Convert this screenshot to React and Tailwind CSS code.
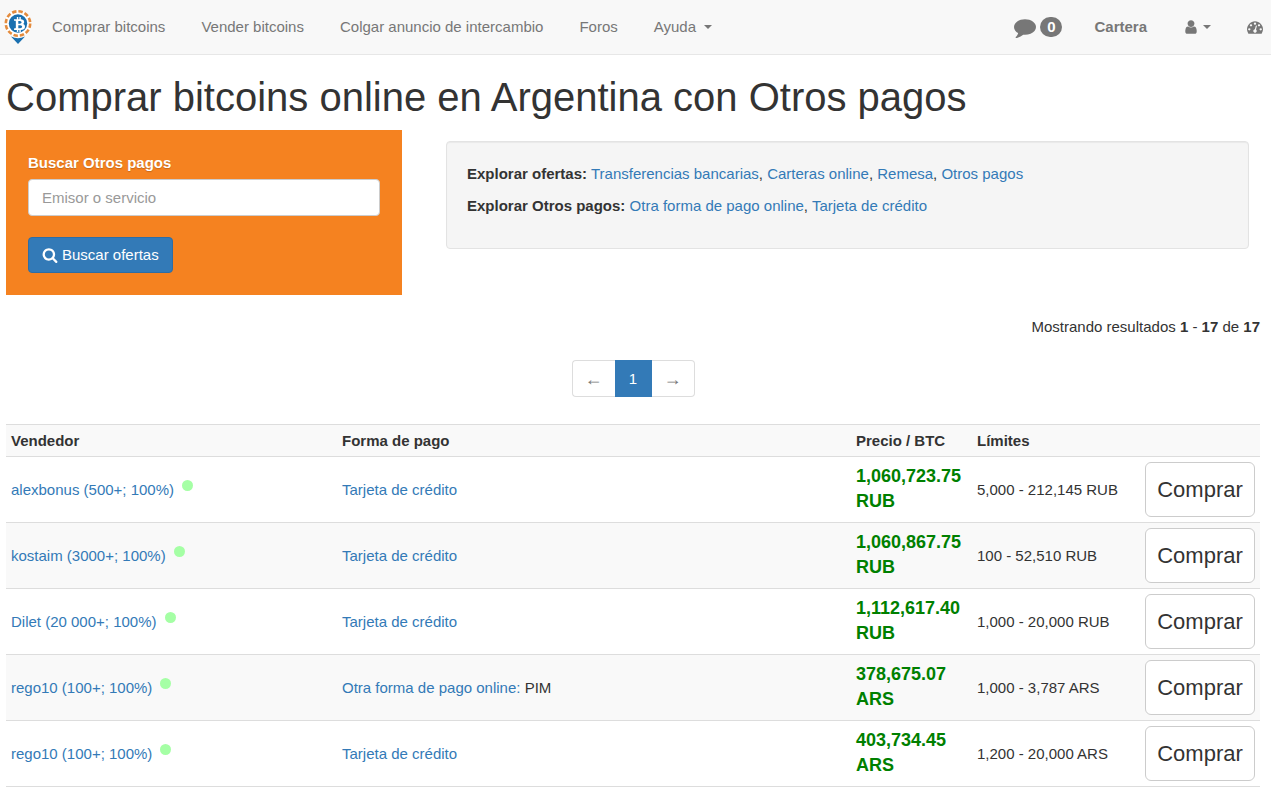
import React, { useState } from 'react';
import { FaBtc } from 'react-icons/fa';

const icons = {
  comment: "M1792 896q0 174-120 321.5t-326 233-450 85.5q-70 0-145-8-198 175-460 242-49 14-114 22h-5q-15 0-27-10.5t-16-27.5v-1q-3-4-.5-12t2-10 4.5-9.5l6-9 7-8.5 8-9q7-8 31-34.5t34.5-38 31-39.5 32.5-51 27-59 26-76q-157-89-247.5-220t-90.5-281q0-130 71-248.5t191-204.5 286-136.5 348-50.5 348 50.5 286 136.5 191 204.5 71 248.5z",
  user: "M1536 1399q0 109-62.5 187t-150.5 78h-854q-88 0-150.5-78t-62.5-187q0-85 8.5-160.5t31.5-152 58.5-131 94-89 134.5-34.5q131 128 313 128t313-128q76 0 134.5 34.5t94 89 58.5 131 31.5 152 8.5 160.5zm-256-887q0 159-112.5 271.5t-271.5 112.5-271.5-112.5-112.5-271.5 112.5-271.5 271.5-112.5 271.5 112.5 112.5 271.5z",
  search: "M1216 832q0-185-131.5-316.5t-316.5-131.5-316.5 131.5-131.5 316.5 131.5 316.5 316.5 131.5 316.5-131.5 131.5-316.5zm512 832q0 52-38 90t-90 38q-54 0-90-38l-343-342q-179 124-399 124-143 0-273.5-55.5t-225-150-150-225-55.5-273.5 55.5-273.5 150-225 225-150 273.5-55.5 273.5 55.5 225 150 150 225 55.5 273.5q0 220-124 399l343 343q37 37 37 90z",
  dashboard: "M384 1152q0-53-37.5-90.5t-90.5-37.5-90.5 37.5-37.5 90.5 37.5 90.5 90.5 37.5 90.5-37.5 37.5-90.5zm192-448q0-53-37.5-90.5t-90.5-37.5-90.5 37.5-37.5 90.5 37.5 90.5 90.5 37.5 90.5-37.5 37.5-90.5zm428 481l101-382q6-26-7.5-48.5t-38.5-29.5-48 6.5-30 39.5l-101 382q-60 5-107 43.5t-63 98.5q-20 77 20 146t117 89 146-20 89-117q16-60-6-117t-72-91zm660-33q0-53-37.5-90.5t-90.5-37.5-90.5 37.5-37.5 90.5 37.5 90.5 90.5 37.5 90.5-37.5 37.5-90.5zm-640-640q0-53-37.5-90.5t-90.5-37.5-90.5 37.5-37.5 90.5 37.5 90.5 90.5 37.5 90.5-37.5 37.5-90.5zm448 192q0-53-37.5-90.5t-90.5-37.5-90.5 37.5-37.5 90.5 37.5 90.5 90.5 37.5 90.5-37.5 37.5-90.5zm320 448q0 261-141 483-19 29-54 29h-1402q-35 0-54-29-141-221-141-483 0-182 71-348t191-286 286-191 348-71 348 71 286 191 191 286 71 348z",
};

const Icon = ({ name, className }) => (
  <svg viewBox="0 0 1792 1792" className={className} fill="currentColor" aria-hidden="true">
    <path d={icons[name]} />
  </svg>
);

const Caret = () => (
  <span className="inline-block border-x-4 border-t-4 border-x-transparent border-t-current" />
);

const Logo = () => (
  <svg viewBox="0 0 28 36" className="h-9 w-7" aria-hidden="true">
    <path d="M7 27.5Q14 31 21 27.5L14 35z" fill="#1a70b0" />
    <circle cx="14" cy="14.5" r="13.5" fill="#fff" />
    <circle cx="14" cy="14.5" r="12.2" fill="none" stroke="#e38b3d" strokeWidth="2.6" strokeDasharray="4.4 1.99" />
    <circle cx="14" cy="14.5" r="9.2" fill="#1a70b0" />
    <FaBtc x="8" y="8" width="12" height="13" color="#fff" />
  </svg>
);

const navLinks = ['Comprar bitcoins', 'Vender bitcoins', 'Colgar anuncio de intercambio', 'Foros'];

const offers = [
  { seller: 'alexbonus (500+; 100%)', method: 'Tarjeta de crédito', price: '1,060,723.75 RUB', limits: '5,000 - 212,145 RUB' },
  { seller: 'kostaim (3000+; 100%)', method: 'Tarjeta de crédito', price: '1,060,867.75 RUB', limits: '100 - 52,510 RUB' },
  { seller: 'Dilet (20 000+; 100%)', method: 'Tarjeta de crédito', price: '1,112,617.40 RUB', limits: '1,000 - 20,000 RUB' },
  { seller: 'rego10 (100+; 100%)', method: 'Otra forma de pago online:', detail: 'PIM', price: '378,675.07 ARS', limits: '1,000 - 3,787 ARS' },
  { seller: 'rego10 (100+; 100%)', method: 'Tarjeta de crédito', price: '403,734.45 ARS', limits: '1,200 - 20,000 ARS' },
];

const Links = ({ items }) =>
  items.map((item, i) => (
    <React.Fragment key={item}>
      {i > 0 && ', '}
      <a href="#" className="text-[#337ab7]">{item}</a>
    </React.Fragment>
  ));

const Navbar = () => (
  <nav className="flex h-[55px] items-center justify-between border-b border-[#e7e7e7] bg-[#f8f8f8] pr-2 pl-1 text-[#777]">
    <div className="flex items-center gap-9">
      <div className="flex items-center gap-5">
        <a href="#" aria-label="Inicio"><Logo /></a>
        <a href="#">{navLinks[0]}</a>
      </div>
      {navLinks.slice(1).map(link => <a key={link} href="#">{link}</a>)}
      <a href="#" className="flex items-center gap-2">Ayuda <Caret /></a>
    </div>
    <div className="flex items-center gap-9">
      <div className="flex items-center gap-8">
        <a href="#" className="flex items-center gap-1">
          <Icon name="comment" className="size-[22px]" />
          <span className="flex h-5 w-[22px] items-center justify-center rounded-full bg-[#777] font-bold text-white">0</span>
        </a>
        <a href="#" className="font-bold">Cartera</a>
      </div>
      <a href="#" aria-label="Cuenta" className="flex items-center gap-1">
        <Icon name="user" className="size-4" />
        <Caret />
      </a>
      <a href="#" aria-label="Panel"><Icon name="dashboard" className="size-4" /></a>
    </div>
  </nav>
);

const SearchBox = () => {
  const [query, setQuery] = useState('');

  return (
    <form
      className="w-[396px] bg-[#f58220] px-[22px] pt-[22px] pb-[22px]"
      onSubmit={e => e.preventDefault()}
    >
      <label htmlFor="provider" className="mb-[5px] block font-bold text-white text-shadow-xs">
        Buscar Otros pagos
      </label>
      <input
        id="provider"
        type="text"
        value={query}
        onChange={e => setQuery(e.target.value)}
        placeholder="Emisor o servicio"
        className="block h-[37px] w-full rounded border border-[#ccc] bg-white px-[13px] text-[#555] placeholder:text-[#999]"
      />
      <button
        type="submit"
        className="mt-[21px] flex h-9 items-center gap-1 rounded border border-[#2e6da4] bg-[#337ab7] px-[13px] text-white"
      >
        <Icon name="search" className="size-4" />
        Buscar ofertas
      </button>
    </form>
  );
};

const Pagination = () => (
  <div className="mt-[22px] flex justify-center">
    <div className="flex h-[37px] text-[#777]">
      <button type="button" aria-label="Anterior" className="w-[43px] rounded-l border border-r-0 border-[#ddd] text-lg">←</button>
      <button type="button" className="w-[37px] bg-[#337ab7] text-white">1</button>
      <button type="button" aria-label="Siguiente" className="w-[43px] rounded-r border border-l-0 border-[#ddd] text-lg">→</button>
    </div>
  </div>
);

const App = () => {
  return (
    <div className="bg-white font-['Liberation_Sans',Arial,sans-serif] text-[15px] leading-[22px] text-[#333]">
      <Navbar />

      <main className="pt-5 pr-[11px] pl-1.5">
        <h1 className="mb-[11px] text-[40px] leading-[44px]">
          Comprar bitcoins online en Argentina con Otros pagos
        </h1>

        <div className="flex items-start gap-11">
          <SearchBox />
          <div className="mt-[11px] mr-[11px] min-h-[108px] flex-1 rounded border border-[#e3e3e3] bg-[#f5f5f5] px-5 py-[21px] shadow-[inset_0_1px_1px_rgba(0,0,0,0.05)]">
            <p className="mb-2.5">
              <strong>Explorar ofertas:</strong>{' '}
              <Links items={['Transferencias bancarias', 'Carteras online', 'Remesa', 'Otros pagos']} />
            </p>
            <p>
              <strong>Explorar Otros pagos:</strong>{' '}
              <Links items={['Otra forma de pago online', 'Tarjeta de crédito']} />
            </p>
          </div>
        </div>

        <p className="mt-[21px] text-right">
          Mostrando resultados <b>1</b> - <b>17</b> de <b>17</b>
        </p>

        <Pagination />

        <table className="mt-[27px] w-full table-fixed border-separate border-spacing-0 border-b border-[#ddd] text-left">
          <thead>
            <tr className="bg-[#f9f9f9]">
              <th className="w-[331px] border-t border-[#ddd] px-[5px] py-1 leading-[23px]">Vendedor</th>
              <th className="border-t border-[#ddd] px-[5px] py-1">Forma de pago</th>
              <th className="w-[121px] border-t border-[#ddd] px-[5px] py-1">Precio / BTC</th>
              <th className="w-[168px] border-t border-[#ddd] px-[5px] py-1">Límites</th>
              <th className="w-[120px] border-t border-[#ddd] px-[5px] py-1" />
            </tr>
          </thead>
          <tbody>
            {offers.map((offer, i) => (
              <tr key={i} className="even:bg-[#f9f9f9]">
                <td className="border-t border-[#ddd] px-[5px]">
                  <div className="flex gap-2">
                    <a href="#" className="text-[#337ab7]">{offer.seller}</a>
                    <span className="mt-px size-[11px] rounded-full bg-[#a5ffa5]" />
                  </div>
                </td>
                <td className="border-t border-[#ddd] px-[5px]">
                  <a href="#" className="text-[#337ab7]">{offer.method}</a> {offer.detail}
                </td>
                <td className="border-t border-[#ddd] px-[5px] pb-0.5 text-lg leading-[25px] font-bold text-[green]">
                  {offer.price}
                </td>
                <td className="border-t border-[#ddd] px-[5px]">{offer.limits}</td>
                <td className="border-t border-[#ddd] p-[5px]">
                  <button type="button" className="block h-[55px] w-full rounded-md border border-[#ccc] bg-white text-[22px]">
                    Comprar
                  </button>
                </td>
              </tr>
            ))}
          </tbody>
        </table>
      </main>
    </div>
  );
};

export default App;
